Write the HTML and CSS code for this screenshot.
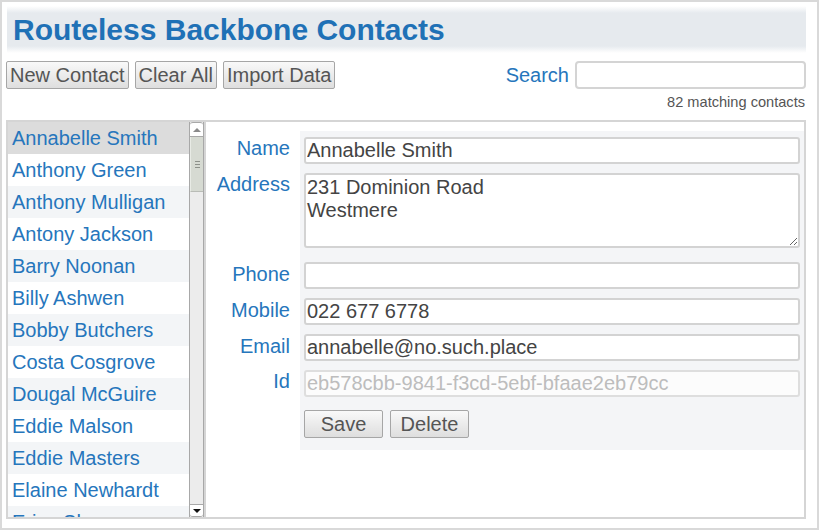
FILE: index.html
```html
<!DOCTYPE html>
<html lang="en">
<head>
<meta charset="utf-8">
<title>Routeless Backbone Contacts</title>
<link rel="stylesheet" href="styles.css">
</head>
<body>
<div class="frame">
  <div class="content">
    <header class="banner"><h1>Routeless Backbone Contacts</h1></header>
    <div class="toolbar">
      <div class="actions">
        <button class="btn">New Contact</button>
        <button class="btn">Clear All</button>
        <button class="btn">Import Data</button>
      </div>
      <div class="search">
        <label class="search-label" for="q">Search</label>
        <input id="q" class="search-input" type="text">
      </div>
    </div>
    <div class="count">82 matching contacts</div>
    <div class="panel">
      <div class="list-wrap">
        <ul class="list">
          <li class="selected">Annabelle Smith</li>
          <li>Anthony Green</li>
          <li>Anthony Mulligan</li>
          <li>Antony Jackson</li>
          <li>Barry Noonan</li>
          <li>Billy Ashwen</li>
          <li>Bobby Butchers</li>
          <li>Costa Cosgrove</li>
          <li>Dougal McGuire</li>
          <li>Eddie Malson</li>
          <li>Eddie Masters</li>
          <li>Elaine Newhardt</li>
          <li>Erica Shaw</li>
        </ul>
        <div class="scrollbar">
          <div class="sb-btn sb-up"><span class="tri-up"></span></div>
          <div class="sb-thumb"><span class="grip"></span><span class="grip"></span><span class="grip"></span></div>
          <div class="sb-track"></div>
          <div class="sb-btn sb-down"><span class="tri-down"></span></div>
        </div>
      </div>
      <div class="detail">
        <div class="form">
          <label class="lbl row-name">Name</label>
          <div class="fld row-name"><input class="inp" type="text" value="Annabelle Smith"></div>

          <label class="lbl row-addr">Address</label>
          <div class="fld row-addr"><textarea class="inp area">231 Dominion Road
Westmere</textarea></div>

          <label class="lbl row-std">Phone</label>
          <div class="fld row-std"><input class="inp" type="text" value=""></div>

          <label class="lbl row-std">Mobile</label>
          <div class="fld row-std"><input class="inp" type="text" value="022 677 6778"></div>

          <label class="lbl row-std">Email</label>
          <div class="fld row-std"><input class="inp" type="text" value="annabelle@no.such.place"></div>

          <label class="lbl row-id">Id</label>
          <div class="fld row-std"><input class="inp inp-id" type="text" value="eb578cbb-9841-f3cd-5ebf-bfaae2eb79cc" readonly></div>

          <div class="lbl"></div>
          <div class="fld row-btns"><button class="btn btn-fixed">Save</button><button class="btn btn-fixed">Delete</button></div>
        </div>
      </div>
    </div>
  </div>
</div>
</body>
</html>
```
FILE: styles.css
```css
html, body {
  margin: 0;
  padding: 0;
  background: #fff;
}
body {
  font-family: "Liberation Sans", Arial, sans-serif;
  font-size: 20px;
  color: #555;
}
.frame {
  width: 819px;
  height: 530px;
  box-sizing: border-box;
  border: 2px solid #d9d9d9;
  padding: 4px 0 0 4px;
}
.content {
  width: 800px;
}
.banner {
  margin-left: 1px;
  height: 47px;
  background: linear-gradient(to bottom, #fff 0, #e6eaee 7px, #e6eaee 40px, #fff 47px);
}
.banner h1 {
  margin: 0;
  padding: 7px 0 0 6px;
  font-size: 30px;
  line-height: 34px;
  font-weight: 700;
  color: #1f71b6;
}
.toolbar {
  margin-top: 8px;
  display: flex;
  justify-content: space-between;
  align-items: center;
}
.actions {
  display: flex;
  gap: 6px;
}
.btn {
  font-family: "Liberation Sans", Arial, sans-serif;
  font-size: 20px;
  line-height: 22px;
  height: 28px;
  box-sizing: border-box;
  padding: 0 3px;
  color: #555;
  border: 1px solid #a6a6a6;
  border-radius: 2px;
  background: linear-gradient(to bottom, #f9f9f9, #dedede);
  margin: 0;
}
.search {
  display: flex;
  align-items: center;
}
.search-label {
  color: #2676bc;
  margin-right: 6px;
}
.search-input {
  width: 231px;
  height: 28px;
  box-sizing: border-box;
  border: 2px solid #d4d4d4;
  border-radius: 4px;
  font-family: "Liberation Sans", Arial, sans-serif;
  font-size: 20px;
  margin: 0;
}
.count {
  margin-top: 5px;
  text-align: right;
  font-size: 14.6px;
  line-height: 17px;
  padding-right: 1px;
  color: #555;
}
.panel {
  margin-top: 9px;
  height: 399px;
  box-sizing: border-box;
  border: 2px solid #d5d5d5;
  display: flex;
}
.list-wrap {
  width: 198px;
  box-sizing: border-box;
  border-right: 2px solid #d5d5d5;
  display: flex;
  overflow: hidden;
}
.list {
  margin: 0;
  padding: 0;
  list-style: none;
  width: 181px;
  overflow: hidden;
}
.list li {
  height: 32px;
  line-height: 32px;
  padding-left: 4px;
  color: #2676bc;
  white-space: nowrap;
}
.list li:nth-child(odd) {
  background: #f3f5f7;
}
.list li.selected {
  background: #dcdcdc;
}
.scrollbar {
  width: 15px;
  display: flex;
  flex-direction: column;
  box-sizing: border-box;
  border-left: 1px solid #a8a8a8;
  border-right: 1px solid #a8a8a8;
  background: #ececec;
}
.sb-btn {
  background: #fff;
  display: flex;
  align-items: center;
  justify-content: center;
  box-sizing: border-box;
}
.sb-up {
  height: 15px;
  border-top: 1px solid #a8a8a8;
  border-bottom: 1px solid #a8a8a8;
  border-radius: 3px 3px 0 0;
}
.sb-down {
  height: 13px;
  border-top: 1px solid #a8a8a8;
  border-bottom: 1px solid #a8a8a8;
  border-radius: 0 0 3px 3px;
}
.tri-up {
  width: 0;
  height: 0;
  border-left: 4px solid transparent;
  border-right: 4px solid transparent;
  border-bottom: 4px solid #8a8a8a;
}
.tri-down {
  width: 0;
  height: 0;
  border-left: 4px solid transparent;
  border-right: 4px solid transparent;
  border-top: 4px solid #111;
}
.sb-thumb {
  height: 54px;
  background: #d6dad2;
  border-left: 1px solid #e8ebe5;
  border-bottom: 1px solid #b9bcb6;
  display: flex;
  flex-direction: column;
  align-items: center;
  justify-content: center;
  gap: 2px;
}
.grip {
  display: block;
  width: 5px;
  height: 1px;
  background: #8d918a;
}
.sb-track {
  flex: 1;
}
.detail {
  flex: 1;
  padding-top: 9px;
}
.form {
  display: grid;
  grid-template-columns: 94px 1fr;
}
.lbl {
  text-align: right;
  padding-right: 10px;
  color: #2676bc;
  line-height: 23px;
  padding-top: 6px;
}
.fld {
  background: #f4f5f7;
  padding: 0 4px;
}
.fld.row-name {
  padding-top: 6px;
  padding-bottom: 5px;
}
.lbl.row-addr {
  padding-top: 4px;
}
.fld.row-addr {
  padding-top: 4px;
  padding-bottom: 9px;
}
.fld.row-std {
  padding-top: 5px;
  padding-bottom: 4px;
}
.lbl.row-id {
  padding-top: 5px;
}
.fld.row-btns {
  padding-top: 9px;
  padding-bottom: 12px;
  display: flex;
  gap: 7px;
}
.inp {
  display: block;
  width: 100%;
  height: 27px;
  box-sizing: border-box;
  margin: 0;
  border: 2px solid #d3d3d3;
  border-radius: 3px;
  padding: 0 1px;
  font-family: "Liberation Sans", Arial, sans-serif;
  font-size: 20px;
  line-height: 23px;
  color: #444;
  background: #fff;
  outline: none;
}
.area {
  height: 75px;
  padding: 1px;
  resize: vertical;
}
.inp-id {
  color: #bdbdbd;
  background: #fcfcfc;
  border-color: #dedede;
}
.btn-fixed {
  width: 79px;
  padding: 0;
}
```
